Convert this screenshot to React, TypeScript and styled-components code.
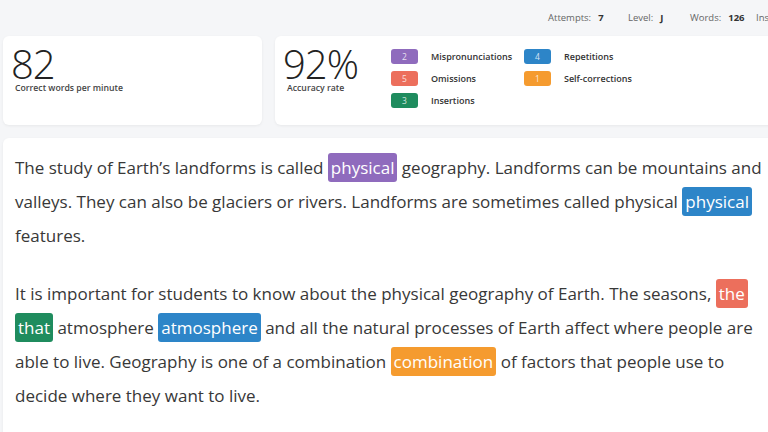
import React from "react";
import styled, { createGlobalStyle } from "styled-components";

const GlobalStyle = createGlobalStyle`
  html, body {
    margin: 0;
    padding: 0;
    background: #f5f6f8;
    overflow: hidden;
  }
  body {
    font-family: "Open Sans", "Noto Sans", sans-serif;
    color: #333;
  }
`;

const Page = styled.div`
  width: 800px;
  padding: 0 0 0 3px;
  display: flex;
  flex-direction: column;
  gap: 13px;
`;

const TopBar = styled.div`
  box-sizing: border-box;
  height: 23px;
  padding-top: 12px;
  display: flex;
  align-items: flex-start;
  justify-content: flex-end;
  font-size: 9.5px;
  white-space: nowrap;
  margin-right: -12px;
`;

const Stat = styled.div<{ $w?: number }>`
  display: flex;
  gap: 7px;
  color: #666;
  line-height: 12px;
  width: ${(p) => (p.$w ? `${p.$w}px` : "auto")};

  b {
    color: #333;
    font-weight: 700;
  }
`;

const StatsRow = styled.div`
  display: grid;
  grid-template-columns: 259px 1fr;
  gap: 13px;
`;

const Card = styled.div`
  background: #fff;
  border-radius: 6px;
  box-shadow: 0 1px 3px rgba(0, 0, 0, 0.06);
`;

const MetricCard = styled(Card)`
  height: 89px;
  display: flex;
  padding: 0 8px;
  gap: 33px;
`;

const Metric = styled.div`
  display: flex;
  flex-direction: column;
  padding-top: 6px;
`;

const BigNumber = styled.div`
  font-size: 40px;
  font-weight: 300;
  line-height: 44px;
  color: #222;
  letter-spacing: -1px;
`;

const MetricLabel = styled.div`
  font-size: 8.7px;
  font-weight: 600;
  color: #444;
  margin-left: 4px;
  margin-top: -4px;
`;

const Legend = styled.div`
  display: grid;
  grid-template-columns: 133px auto;
  grid-auto-rows: 22px;
  padding-top: 13px;
`;

const LegendItem = styled.div`
  display: flex;
  align-items: center;
  gap: 13px;
  font-size: 9px;
  font-weight: 600;
  color: #333;
  height: 15px;
`;

const Badge = styled.span<{ $color: string }>`
  display: inline-flex;
  align-items: center;
  justify-content: center;
  width: 27px;
  height: 15px;
  border-radius: 3px;
  background: ${(p) => p.$color};
  color: rgba(255, 255, 255, 0.8);
  font-size: 8.5px;
  font-weight: 400;
`;

const TextCard = styled(Card)`
  padding: 13px 12px 30px 12px;
  height: 400px;
`;

const Passage = styled.div`
  width: 752px;
  font-size: 17px;
  line-height: 34px;
  color: #383838;

  p {
    margin: 0 0 24px 0;
  }
`;

const Mark = styled.span<{ $color: string }>`
  background: ${(p) => p.$color};
  color: #fff;
  padding: 3px 3px;
  border-radius: 3px;
`;

const colors = {
  purple: "#8f6bbd",
  red: "#ec6f5c",
  green: "#1f8c5e",
  blue: "#2d85c8",
  orange: "#f59b2f",
};

const legend = [
  { n: 2, label: "Mispronunciations", color: colors.purple },
  { n: 4, label: "Repetitions", color: colors.blue },
  { n: 5, label: "Omissions", color: colors.red },
  { n: 1, label: "Self-corrections", color: colors.orange },
  { n: 3, label: "Insertions", color: colors.green },
];

export default function App() {
  return (
    <>
      <GlobalStyle />
      <Page>
        <TopBar>
          <Stat $w={80}>
            Attempts: <b>7</b>
          </Stat>
          <Stat $w={62}>
            Level: <b>J</b>
          </Stat>
          <Stat $w={66}>
            Words: <b>126</b>
          </Stat>
          <Stat>
            Insertions: <b>3</b>
          </Stat>
        </TopBar>

        <StatsRow>
          <MetricCard>
            <Metric>
              <BigNumber>82</BigNumber>
              <MetricLabel>Correct words per minute</MetricLabel>
            </Metric>
          </MetricCard>
          <MetricCard>
            <Metric>
              <BigNumber>92%</BigNumber>
              <MetricLabel>Accuracy rate</MetricLabel>
            </Metric>
            <Legend>
              {legend.map((l) => (
                <LegendItem key={l.label}>
                  <Badge $color={l.color}>{l.n}</Badge>
                  {l.label}
                </LegendItem>
              ))}
            </Legend>
          </MetricCard>
        </StatsRow>

        <TextCard>
          <Passage>
            <p>
              The study of Earth’s landforms is called{" "}
              <Mark $color={colors.purple}>physical</Mark> geography. Landforms
              can be mountains and valleys. They can also be glaciers or
              rivers. Landforms are sometimes called physical{" "}
              <Mark $color={colors.blue}>physical</Mark> features.
            </p>
            <p>
              It is important for students to know about the physical geography
              of Earth. The seasons, <Mark $color={colors.red}>the</Mark>{" "}
              <Mark $color={colors.green}>that</Mark> atmosphere{" "}
              <Mark $color={colors.blue}>atmosphere</Mark> and all the natural
              processes of Earth affect where people are able to live.
              Geography is one of a combination{" "}
              <Mark $color={colors.orange}>combination</Mark> of factors that
              people use to decide where they want to live.
            </p>
          </Passage>
        </TextCard>
      </Page>
    </>
  );
}
